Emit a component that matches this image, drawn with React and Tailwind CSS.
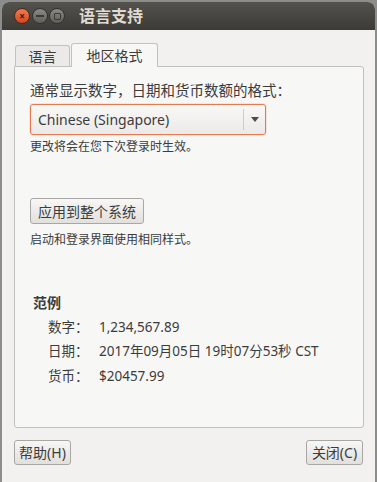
import React from "react";

const font = { fontFamily: '"Noto Sans", "Noto Sans CJK SC", sans-serif' };

function TitleBar() {
  return (
    <div className="h-[28px] flex items-center rounded-t-[7px] bg-gradient-to-b from-[#53524d] to-[#3c3b37] pl-[12px]">
      <div className="w-[16px] h-[16px] rounded-full bg-gradient-to-b from-[#f27a4a] to-[#d9451c] border border-[#4a2b1e] flex items-center justify-center text-[#3a1b10] text-[10px] leading-none font-bold">
        ×
      </div>
      <div className="ml-[2px] w-[16px] h-[16px] rounded-full bg-gradient-to-b from-[#8c8a85] to-[#5f5e59] border border-[#33322e] flex items-center justify-center">
        <div className="w-[8px] h-[2px] bg-[#3a3935]" />
      </div>
      <div className="ml-[1px] w-[16px] h-[16px] rounded-full bg-gradient-to-b from-[#8c8a85] to-[#5f5e59] border border-[#33322e] flex items-center justify-center">
        <div className="w-[7px] h-[7px] border border-[#3a3935] rounded-[1px]" />
      </div>
      <div className="ml-[14px] text-[16px] font-bold text-[#dfdbd2] leading-none">语言支持</div>
    </div>
  );
}

function Button({ children, className = "" }) {
  return (
    <div
      className={
        "flex items-center justify-center border border-[#a9a7a3] rounded-[3px] bg-gradient-to-b from-[#f7f7f6] to-[#e2e0dd] text-[14px] text-[#3c3c3c] " +
        className
      }
    >
      {children}
    </div>
  );
}

function Row({ label, value }) {
  return (
    <div className="flex h-[20px] items-center text-[13.5px] text-[#3c3c3c]">
      <span className="w-[51px]">{label}</span>
      <span>{value}</span>
    </div>
  );
}

export default function App() {
  return (
    <div className="w-[377px] h-[482px] bg-[#8d8d8b] pl-[2px] pr-[2px] pt-[2px] overflow-hidden" style={font}>
      <div className="h-full flex flex-col rounded-t-[7px] bg-[#f2f1f0]">
        <TitleBar />
        <div className="flex-1 px-[12px] pt-[12px] flex flex-col">
          <div className="flex items-end h-[24px] pl-[1px]">
            <div className="w-[55px] h-[21px] border border-b-0 border-[#c4c2be] rounded-t-[3px] bg-[#ebeae8] flex items-center justify-center text-[14px] text-[#3c3c3c]">
              语言
            </div>
            <div className="ml-[1px] w-[87px] h-[24px] border border-b-0 border-[#c4c2be] rounded-t-[3px] bg-[#f7f7f6] flex items-center justify-center text-[14px] text-[#3c3c3c] relative top-[1px] z-10">
              地区格式
            </div>
          </div>
          <div className="h-[362px] w-[350px] border border-[#c2c0bc] rounded-b-[3px] rounded-tr-[3px] bg-[#f7f7f6] pl-[15px] pt-[14px] flex flex-col">
            <div className="h-[20px] flex items-center text-[14.5px] text-[#3c3c3c] whitespace-nowrap">
              通常显示数字，日期和货币数额的格式：
            </div>
            <div className="mt-[3px] w-[236px] h-[31px] border border-[#e8784e] rounded-[3px] bg-gradient-to-b from-[#f8f8f7] to-[#eceae8] flex items-center shadow-[0_0_0_1px_rgba(233,120,78,0.15)]">
              <span className="pl-[7px] flex-1 text-[14px] text-[#3c3c3c]">Chinese (Singapore)</span>
              <div className="w-px h-[21px] bg-[#cfcdc9]" />
              <div className="w-[21px] flex justify-center">
                <div className="w-0 h-0 border-l-[4px] border-r-[4px] border-t-[5px] border-l-transparent border-r-transparent border-t-[#4c4c4c]" />
              </div>
            </div>
            <div className="mt-[3px] h-[17px] flex items-center text-[12px] text-[#3c3c3c]">
              更改将会在您下次登录时生效。
            </div>
            <Button className="mt-[43px] w-[114px] h-[26px]">应用到整个系统</Button>
            <div className="mt-[7px] h-[17px] flex items-center text-[12px] text-[#3c3c3c]">
              启动和登录界面使用相同样式。
            </div>
            <div className="mt-[44px] ml-[3px] h-[20px] flex items-center text-[14px] font-bold text-[#3c3c3c]">
              范例
            </div>
            <div className="ml-[18px] mt-[5px] flex flex-col gap-[4.5px]">
              <Row label="数字：" value="1,234,567.89" />
              <Row label="日期：" value="2017年09月05日 19时07分53秒 CST" />
              <Row label="货币：" value="$20457.99" />
            </div>
          </div>
          <div className="mt-[12px] flex justify-between">
            <Button className="w-[57px] h-[25px]">帮助(H)</Button>
            <Button className="w-[57px] h-[25px]">关闭(C)</Button>
          </div>
        </div>
      </div>
    </div>
  );
}
